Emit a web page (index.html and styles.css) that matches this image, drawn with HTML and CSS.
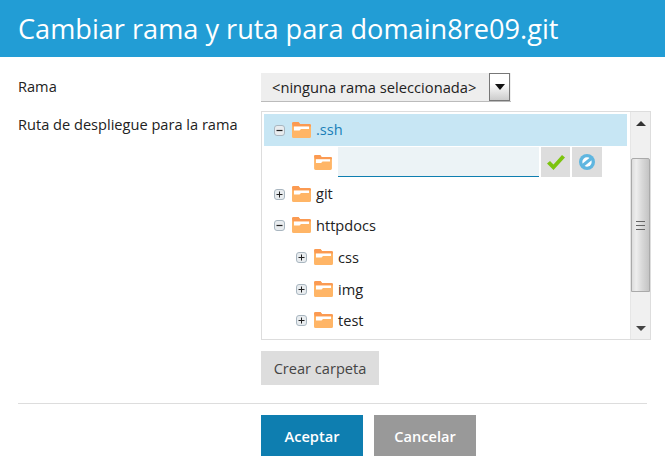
FILE: index.html
```html
<!DOCTYPE html>
<html lang="es">
<head>
<meta charset="utf-8">
<title>Cambiar rama y ruta</title>
<link rel="stylesheet" href="styles.css">
</head>
<body>
<header class="title-bar"><h1>Cambiar rama y ruta para domain8re09.git</h1></header>
<main class="form">
  <div class="row row-branch">
    <label class="label">Rama</label>
    <div class="select">
      <span class="select-value">&lt;ninguna rama seleccionada&gt;</span>
      <span class="select-arrow"><svg width="12" height="6" viewBox="0 0 12 6"><path d="M1 0h10L6 6z" fill="#111"/></svg></span>
    </div>
  </div>
  <div class="row">
    <label class="label">Ruta de despliegue para la rama</label>
    <div class="field">
      <div class="tree-box">
        <div class="tree">
          <div class="node selected">
            <svg class="toggle" viewBox="0 0 11 11"><use href="#box"/><path d="M2.500 5.500h6" stroke="#222" stroke-width="1.200"/></svg>
            <svg class="folder" viewBox="0 0 19 16"><use href="#fold"/></svg>
            <span class="name raised link">.ssh</span>
          </div>
          <div class="node-edit">
            <svg class="folder" viewBox="0 0 19 16"><use href="#fold"/></svg>
            <div class="name-input"></div>
            <span class="icon-btn ok"><svg width="18" height="15" viewBox="0 0 18 15"><path d="M0 8.500l3-2.500 3.500 3.500 8.500-9.500 3 2.500-11.500 12.500z" fill="#7cc40e"/></svg></span>
            <span class="icon-btn cancel"><svg width="16" height="16" viewBox="0 0 16 16"><circle cx="8" cy="8" r="8" fill="#5fb6e0"/><circle cx="8" cy="8" r="4.700" fill="#fff"/><path d="M2.500 12.500l11-9" stroke="#5fb6e0" stroke-width="3"/></svg></span>
          </div>
          <div class="node tight">
            <svg class="toggle" viewBox="0 0 11 11"><use href="#box"/><path d="M2.500 5.500h6M5.500 2.500v6" stroke="#222" stroke-width="1"/></svg>
            <svg class="folder" viewBox="0 0 19 16"><use href="#fold"/></svg>
            <span class="name raised">git</span>
          </div>
          <div class="node">
            <svg class="toggle" viewBox="0 0 11 11"><use href="#box"/><path d="M2.500 5.500h6" stroke="#222" stroke-width="1.200"/></svg>
            <svg class="folder" viewBox="0 0 19 16"><use href="#fold"/></svg>
            <span class="name">httpdocs</span>
          </div>
          <div class="node child">
            <svg class="toggle" viewBox="0 0 11 11"><use href="#box"/><path d="M2.500 5.500h6M5.500 2.500v6" stroke="#222" stroke-width="1"/></svg>
            <svg class="folder" viewBox="0 0 19 16"><use href="#fold"/></svg>
            <span class="name">css</span>
          </div>
          <div class="node child tight">
            <svg class="toggle" viewBox="0 0 11 11"><use href="#box"/><path d="M2.500 5.500h6M5.500 2.500v6" stroke="#222" stroke-width="1"/></svg>
            <svg class="folder" viewBox="0 0 19 16"><use href="#fold"/></svg>
            <span class="name">img</span>
          </div>
          <div class="node child">
            <svg class="toggle" viewBox="0 0 11 11"><use href="#box"/><path d="M2.500 5.500h6M5.500 2.500v6" stroke="#222" stroke-width="1"/></svg>
            <svg class="folder" viewBox="0 0 19 16"><use href="#fold"/></svg>
            <span class="name">test</span>
          </div>
        </div>
        <div class="scrollbar">
          <span class="arrow"><svg width="10" height="5" viewBox="0 0 10 5"><path d="M5 0l5 5H0z" fill="#333"/></svg></span>
          <div class="thumb"><span class="grip"></span></div>
          <span class="arrow arrow-down"><svg width="10" height="5" viewBox="0 0 10 5"><path d="M0 0h10L5 5z" fill="#444"/></svg></span>
        </div>
      </div>
      <button class="btn-create" type="button">Crear carpeta</button>
    </div>
  </div>
  <div class="actions">
    <button class="btn primary" type="button">Aceptar</button>
    <button class="btn secondary" type="button">Cancelar</button>
  </div>
</main>
<svg class="defs" width="0" height="0" aria-hidden="true">
  <defs>
    <g id="box"><rect x=".5" y=".5" width="10" height="10" rx="2.500" fill="#e8ecef" stroke="#a9b6c0"/></g>
    <g id="fold">
      <path d="M0 1.500a1.500 1.500 0 0 1 1.500-1.500h5l1.500 2h9.500a1.500 1.500 0 0 1 1.500 1.500v11a1.500 1.500 0 0 1-1.500 1.500h-16a1.500 1.500 0 0 1-1.500-1.500z" fill="#ffb566"/>
      <path d="M0 1.500a1.500 1.500 0 0 1 1.500-1.500h5l1.500 2h9.500a1.500 1.500 0 0 1 1.500 1.500v1h-18z" fill="#fb9a52"/>
      <path d="M2 4.500h15v2.500h-8l-1.500 1.500h-5.500z" fill="#fff"/>
    </g>
  </defs>
</svg>
</body>
</html>
```
FILE: styles.css
```css
* { box-sizing: border-box; }
html, body { margin: 0; padding: 0; }
body { width: 665px; height: 467px; overflow: hidden; background: #fff; font-family: "Open Sans", sans-serif; font-size: 14.6px; color: #222; }
.title-bar { height: 57px; background: #229dd5; padding: 0 18px; display: flex; align-items: center; }
.title-bar h1 { margin: 0; font-size: 27.15px; font-weight: 400; color: #fff; white-space: nowrap; }
.form { padding: 16px 18px 0; }
.row { display: flex; }
.row-branch { height: 38px; }
.label { width: 243px; line-height: 26px; flex: none; }
.select { width: 250px; height: 29px; display: flex; background: #eee; border-bottom: 1px solid #bbb; }
.select-value { width: 228px; padding-left: 11px; line-height: 28px; white-space: nowrap; font-size: 14.7px; }
.select-arrow { width: 21px; height: 28px; border: 1px solid #777; background: linear-gradient(#fff 35%, #ccc); display: flex; justify-content: center; padding-top: 10px; }
.select-arrow svg { display: block; }
.field { width: 390px; }
.tree-box { width: 390px; height: 229px; border: 1px solid #ddd; display: flex; }
.tree { flex: 1; padding: 2px 2px 0; min-width: 0; }
.node { height: 32px; display: flex; align-items: center; padding-left: 10px; }
.node.tight { height: 31px; padding-top: 1px; }
.node.selected { background: #c7e6f4; width: 363px; }
.node.child { padding-left: 32px; }
.toggle { width: 11px; height: 11px; flex: none; margin-right: 7px; }
.folder { width: 19px; height: 16px; flex: none; margin-right: 5px; }
.name { line-height: 20px; color: #222; }
.name.raised { padding-bottom: 2px; }
.name.link { color: #1a7fb8; }
.node-edit { height: 30px; margin: 1px 0; display: flex; align-items: flex-start; padding-left: 50px; }
.node-edit .folder { width: 18px; height: 15px; margin: 8px 6px 0 0; }
.name-input { width: 201px; height: 30px; background: #ecf3f6; border-bottom: 1px solid #0e7eb0; }
.icon-btn { height: 30px; background: #ddd; display: flex; align-items: center; justify-content: center; margin-left: 2px; }
.ok { width: 29px; }
.cancel { width: 30px; }
.scrollbar { width: 20px; flex: none; background: #f0f0f0; border-left: 1px solid #e6e6e6; display: flex; flex-direction: column; align-items: center; }
.arrow { height: 46px; flex: none; padding-top: 8px; display: block; line-height: 0; }
.arrow-down { height: auto; margin-top: auto; padding: 0 0 8px; }
.thumb { width: 19px; height: 134px; background: linear-gradient(90deg, #ddd, #eee 25%, #d8d8d8 60%, #c4c4c4); border: 1px solid #aaa; border-radius: 2px 2px 0 0; display: flex; align-items: center; justify-content: center; flex: none; }
.grip { width: 9px; height: 9px; border-top: 1px solid #666; border-bottom: 1px solid #666; background: linear-gradient(#666, #666) center / 100% 1px no-repeat; }
.btn-create { display: block; margin-top: 11px; width: 118px; height: 34px; border: 0; background: #ddd; color: #444; font: 14.6px "Open Sans", sans-serif; padding: 0; }
.actions { margin-top: 18px; border-top: 1px solid #ddd; padding: 11px 0 0 243px; display: flex; gap: 11px; }
.btn { width: 102px; height: 41px; border: 0; color: #fff; font: 600 14.6px "Open Sans", sans-serif; padding: 0; }
.primary { background: #0e7eb0; }
.secondary { background: #999; }
.defs { position: absolute; }
```
